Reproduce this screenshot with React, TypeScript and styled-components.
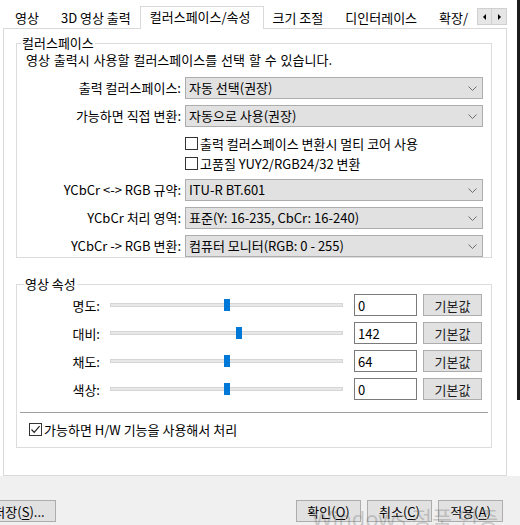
import React from "react";
import styled, { createGlobalStyle } from "styled-components";

const GlobalStyle = createGlobalStyle`
  html, body {
    margin: 0;
    padding: 0;
    background: #ffffff;
  }
  body {
    font-family: "Noto Sans CJK KR", "Noto Sans", sans-serif;
    font-size: 13px;
    color: #000;
  }
  * {
    box-sizing: border-box;
  }
`;

const tabs = [
  "영상",
  "3D 영상 출력",
  "컬러스페이스/속성",
  "크기 조절",
  "디인터레이스",
  "확장/기타",
];
const ACTIVE_TAB = 2;

const topRows = [
  { label: "출력 컬러스페이스:", value: "자동 선택(권장)" },
  { label: "가능하면 직접 변환:", value: "자동으로 사용(권장)" },
];

const bottomRows = [
  { label: "YCbCr <-> RGB 규약:", value: "ITU-R BT.601" },
  { label: "YCbCr 처리 영역:", value: "표준(Y: 16-235, CbCr: 16-240)" },
  { label: "YCbCr -> RGB 변환:", value: "컴퓨터 모니터(RGB: 0 - 255)" },
];

const sliders = [
  { label: "명도:", value: 0, min: -255, max: 255 },
  { label: "대비:", value: 142, min: 0, max: 256 },
  { label: "채도:", value: 64, min: 0, max: 128 },
  { label: "색상:", value: 0, min: -180, max: 180 },
];

const Chevron = () => (
  <svg width="9" height="5" viewBox="0 0 9 5">
    <path d="M0.5 0.5 L4.5 4.5 L8.5 0.5" fill="none" stroke="#6d6d6d" strokeWidth="1" />
  </svg>
);

const Combo: React.FC<{ value: string }> = ({ value }) => (
  <ComboBox>
    <span>{value}</span>
    <Chevron />
  </ComboBox>
);

const Check: React.FC<{ checked?: boolean; label: string }> = ({ checked, label }) => (
  <CheckRow>
    <CheckBox>
      {checked && (
        <svg width="11" height="11" viewBox="0 0 11 11">
          <path d="M1.5 5.5 L4.2 8.3 L9.6 2.2" fill="none" stroke="#222" strokeWidth="1.2" />
        </svg>
      )}
    </CheckBox>
    <span>{label}</span>
  </CheckRow>
);

export default function App() {
  return (
    <>
      <GlobalStyle />
      <Window>
        <TabStrip>
          <TabList>
            {tabs.map((t, i) => (
              <Tab key={t} $active={i === ACTIVE_TAB}>
                {t}
              </Tab>
            ))}
          </TabList>
          <Spin>
            <SpinButton>
              <Arrow $dir="left" />
            </SpinButton>
            <SpinButton>
              <Arrow $dir="right" />
            </SpinButton>
          </Spin>
        </TabStrip>

        <Panel>
          <Group>
            <Legend>컬러스페이스</Legend>
            <GroupBody $pl={9} $pr={8}>
              <Description>영상 출력시 사용할 컬러스페이스를 선택 할 수 있습니다.</Description>
              <FormGrid>
                {topRows.map((r) => (
                  <React.Fragment key={r.label}>
                    <FieldLabel>{r.label}</FieldLabel>
                    <Combo value={r.value} />
                  </React.Fragment>
                ))}
                <span />
                <CheckStack>
                  <Check label="출력 컬러스페이스 변환시 멀티 코어 사용" />
                  <Check label="고품질 YUY2/RGB24/32 변환" />
                </CheckStack>
                {bottomRows.map((r) => (
                  <React.Fragment key={r.label}>
                    <FieldLabel>{r.label}</FieldLabel>
                    <Combo value={r.value} />
                  </React.Fragment>
                ))}
              </FormGrid>
            </GroupBody>
          </Group>

          <Group $gap={18}>
            <Legend $offset={7}>영상 속성</Legend>
            <GroupBody $pl={3} $pr={9} $pb={8}>
              <SliderList>
                {sliders.map((s) => {
                  const frac = (s.value - s.min) / (s.max - s.min);
                  return (
                    <SliderRow key={s.label}>
                      <SliderLabel>{s.label}</SliderLabel>
                      <Track>
                        <Thumb style={{ left: `calc(${frac * 100}% - 3px)` }} />
                      </Track>
                      <NumberBox readOnly value={s.value} />
                      <SmallButton>기본값</SmallButton>
                    </SliderRow>
                  );
                })}
              </SliderList>
              <Separator />
              <HwRow>
                <Check checked label="가능하면 H/W 기능을 사용해서 처리" />
              </HwRow>
            </GroupBody>
          </Group>
        </Panel>

        <ButtonBar>
          <SaveButton>
            저장(<u>S</u>)...
          </SaveButton>
          <Spacer />
          <DialogButton>
            확인(<u>O</u>)
          </DialogButton>
          <DialogButton>
            취소(<u>C</u>)
          </DialogButton>
          <DialogButton>
            적용(<u>A</u>)
          </DialogButton>
        </ButtonBar>

        <EdgeShade />
        <Watermark>Windows 정품 인증</Watermark>
      </Window>
    </>
  );
}

const Window = styled.div`
  position: relative;
  width: 520px;
  height: 525px;
  overflow: hidden;
  background: #ffffff;
  display: flex;
  flex-direction: column;
`;

const TabStrip = styled.div`
  height: 28px;
  display: flex;
  align-items: flex-start;
  padding-left: 3px;
`;

const TabList = styled.div`
  position: relative;
  z-index: 1;
  width: 466px;
  height: 29px;
  overflow: hidden;
  display: flex;
  align-items: flex-end;
  padding-left: 1px;
`;

const Tab = styled.div<{ $active: boolean }>`
  flex: none;
  white-space: nowrap;
  display: flex;
  align-items: center;
  line-height: 16px;
  color: #000;
  ${({ $active }) =>
    $active
      ? `
        height: 23px;
        padding: 0 12px 3px 9px;
        margin: 0 -2px;
        background: #ffffff;
        border: 1px solid #d9d9d9;
        border-bottom: none;
      `
      : `
        height: 20px;
        margin-bottom: 1px;
        padding: 0 11px 1px;
      `}
`;

const Spin = styled.div`
  display: flex;
  margin: 8px 0 0 8px;
`;

const SpinButton = styled.div`
  width: 15px;
  height: 17px;
  background: #e6e6e6;
  border: 1px solid #d0d0d0;
  display: flex;
  align-items: center;
  justify-content: center;
  & + & {
    border-left: none;
  }
`;

const Arrow = styled.span<{ $dir: "left" | "right" }>`
  width: 0;
  height: 0;
  border-top: 3px solid transparent;
  border-bottom: 3px solid transparent;
  ${({ $dir }) =>
    $dir === "left" ? "border-right: 3px solid #000;" : "border-left: 3px solid #000;"}
`;

const Panel = styled.div`
  margin-left: 3px;
  width: 504px;
  height: 448px;
  background: #ffffff;
  border: 1px solid #d9d9d9;
  padding: 6px 14px 0 12px;
`;

const Group = styled.fieldset<{ $gap?: number }>`
  margin: ${({ $gap }) => $gap ?? 0}px 0 0 0;
  padding: 0;
  min-inline-size: 0;
  border: 1px solid #dcdcdc;
`;

const Legend = styled.legend<{ $offset?: number }>`
  margin-left: ${({ $offset }) => $offset ?? 4}px;
  padding: 0 1px;
  line-height: 16px;
  font-size: 13px;
`;

const GroupBody = styled.div<{ $pl: number; $pr: number; $pb?: number }>`
  padding: 0 ${({ $pr }) => $pr}px ${({ $pb }) => $pb ?? 0}px ${({ $pl }) => $pl}px;
`;

const Description = styled.div`
  line-height: 18px;
  white-space: nowrap;
  word-spacing: 1px;
`;

const FormGrid = styled.div`
  margin-top: 8px;
  display: grid;
  grid-template-columns: 155px 298px;
  column-gap: 4px;
  row-gap: 6px;
  align-items: center;
`;

const FieldLabel = styled.div`
  text-align: right;
  white-space: nowrap;
  line-height: 22px;
`;

const ComboBox = styled.div`
  height: 22px;
  background: #e1e1e1;
  border: 1px solid #adadad;
  display: flex;
  align-items: center;
  justify-content: space-between;
  padding: 0 5px 0 3px;
  white-space: nowrap;
  line-height: 20px;
`;

const CheckStack = styled.div`
  display: flex;
  flex-direction: column;
`;

const CheckRow = styled.div`
  display: flex;
  align-items: center;
  gap: 2px;
  height: 20px;
  white-space: nowrap;
`;

const CheckBox = styled.span`
  width: 13px;
  height: 13px;
  flex: none;
  border: 1px solid #333333;
  background: #ffffff;
  display: flex;
  align-items: center;
  justify-content: center;
`;

const SliderList = styled.div`
  margin-top: 2px;
  display: flex;
  flex-direction: column;
  gap: 6px;
`;

const SliderRow = styled.div`
  display: flex;
  align-items: center;
  height: 22px;
`;

const SliderLabel = styled.div`
  width: 80px;
  text-align: right;
  white-space: nowrap;
`;

const Track = styled.div`
  position: relative;
  width: 233px;
  height: 4px;
  margin-left: 10px;
  background: #e7e7e7;
  border: 1px solid #d6d6d6;
`;

const Thumb = styled.span`
  position: absolute;
  top: -5px;
  width: 6px;
  height: 12px;
  background: #0078d7;
`;

const NumberBox = styled.input`
  width: 63px;
  height: 22px;
  margin-left: 11px;
  border: 1px solid #7a7a7a;
  padding: 0 3px;
  font-family: inherit;
  font-size: 13px;
  color: #000;
  background: #fff;
  outline: none;
`;

const SmallButton = styled.div`
  width: 59px;
  height: 22px;
  margin-left: 6px;
  background: #e1e1e1;
  border: 1px solid #adadad;
  display: flex;
  align-items: center;
  justify-content: center;
  color: #1a1a1a;
`;

const Separator = styled.div`
  height: 1px;
  margin: 12px -6px 0 0;
  background: #a0a0a0;
`;

const HwRow = styled.div`
  margin-top: 6px;
  padding-left: 9px;
`;

const ButtonBar = styled.div`
  flex: 1;
  display: flex;
  align-items: flex-start;
  gap: 6px;
  padding: 24px 17px 0 0;
  background: #f0f0f0;
`;

const ButtonBase = styled.div`
  height: 22px;
  background: #e1e1e1;
  border: 1px solid #adadad;
  display: flex;
  align-items: center;
  justify-content: center;
  white-space: nowrap;
  u {
    text-underline-offset: 2px;
  }
`;

const SaveButton = styled(ButtonBase)`
  width: 74px;
  margin-left: -18px;
`;

const DialogButton = styled(ButtonBase)`
  width: 65px;
`;

const Spacer = styled.div`
  flex: 1;
`;

const EdgeShade = styled.div`
  position: absolute;
  top: 0;
  right: 0;
  width: 3px;
  height: 400px;
  background: #1c1c1c;
`;

const Watermark = styled.div`
  position: absolute;
  left: 312px;
  top: 503px;
  font-family: "Noto Sans", "Noto Sans CJK KR", sans-serif;
  font-size: 22px;
  line-height: 30px;
  color: rgba(120, 120, 120, 0.35);
  white-space: nowrap;
  pointer-events: none;
`;
